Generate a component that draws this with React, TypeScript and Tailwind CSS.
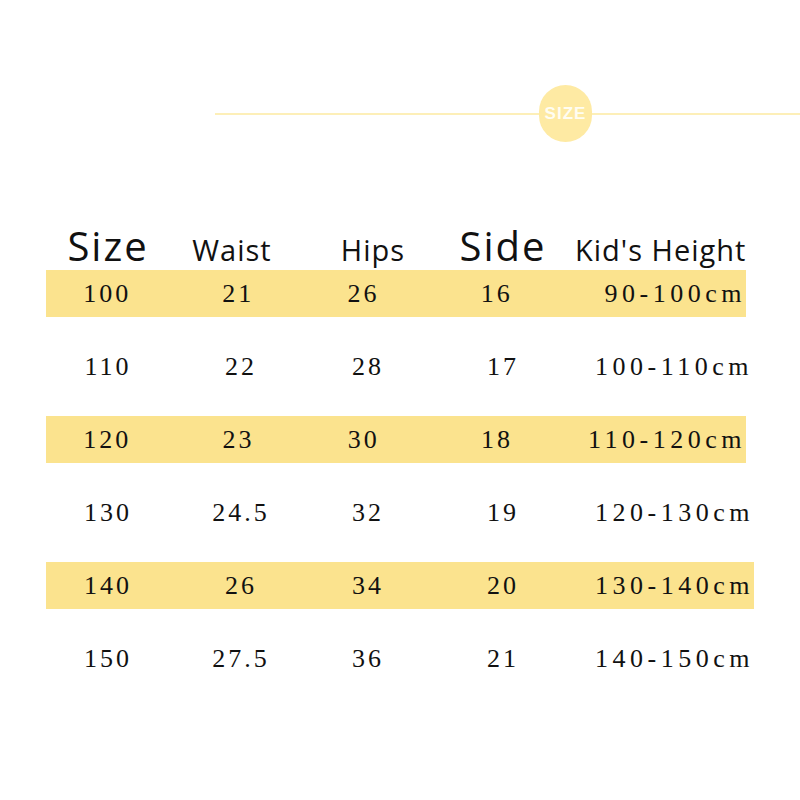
const rows = [
  { size: "100", waist: "21", hips: "26", side: "16", height: "90-100cm", band: "w-[700px]", hp: "pl-[30px]" },
  { size: "110", waist: "22", hips: "28", side: "17", height: "100-110cm", band: "", hp: "pl-[13px]" },
  { size: "120", waist: "23", hips: "30", side: "18", height: "110-120cm", band: "w-[700px]", hp: "pl-[13px]" },
  { size: "130", waist: "24.5", hips: "32", side: "19", height: "120-130cm", band: "", hp: "pl-[13px]" },
  { size: "140", waist: "26", hips: "34", side: "20", height: "130-140cm", band: "w-[708px]", hp: "pl-[13px]" },
  { size: "150", waist: "27.5", hips: "36", side: "21", height: "140-150cm", band: "", hp: "pl-[13px]" },
];

const cols = ["w-[124px]", "w-[142px]", "w-[112px]", "w-[158px]", "w-[172px]"];

export default function App() {
  return (
    <div className="w-[800px] h-[800px] bg-white overflow-hidden">
      {/* SIZE DIVIDER */}
      <div className="flex items-center pl-[215px] pt-[85px]">
        <div className="flex-1 h-[2px] bg-[#fdefb8]" />
        <div className="w-[53px] h-[57px] rounded-full bg-[#feeaa3] flex items-center justify-center">
          <span className="text-[#fffdf2] text-[17px] font-bold tracking-[1px] font-['Liberation_Sans_Narrow','Liberation_Sans',sans-serif]">
            SIZE
          </span>
        </div>
        <div className="w-[208px] h-[2px] bg-[#fdefb8]" />
      </div>

      {/* HEADER */}
      <div className="flex items-baseline pl-[46px] mt-[84px] h-[44px] whitespace-nowrap font-['Open_Sans',sans-serif] text-[#111]">
        <div className={`${cols[0]} text-center text-[40px] tracking-[2px] leading-none`}>Size</div>
        <div className={`${cols[1]} text-center text-[29px] tracking-[1px] leading-none pr-[18px]`}>Waist</div>
        <div className={`${cols[2]} text-center text-[29px] tracking-[1px] leading-none pl-[10px]`}>Hips</div>
        <div className={`${cols[3]} text-center text-[40px] tracking-[2px] leading-none`}>Side</div>
        <div className={`${cols[4]} -ml-[7px] text-[29px] tracking-[1px] leading-none`}>Kid's Height</div>
      </div>

      {/* ROWS */}
      <div className="flex flex-col gap-[26px] pl-[46px] font-['Liberation_Serif',serif] text-[26px] text-[#111] tracking-[3px]">
        {rows.map((r) => (
          <div
            key={r.size}
            className={`flex items-center h-[47px] ${r.band ? `${r.band} bg-[#fbe38e]` : ""}`}
          >
            <div className={`${cols[0]} text-center`}>{r.size}</div>
            <div className={`${cols[1]} text-center`}>{r.waist}</div>
            <div className={`${cols[2]} text-center`}>{r.hips}</div>
            <div className={`${cols[3]} text-center`}>{r.side}</div>
            <div className={`${cols[4]} ${r.hp} tracking-[4.5px] whitespace-nowrap`}>{r.height}</div>
          </div>
        ))}
      </div>
    </div>
  );
}
